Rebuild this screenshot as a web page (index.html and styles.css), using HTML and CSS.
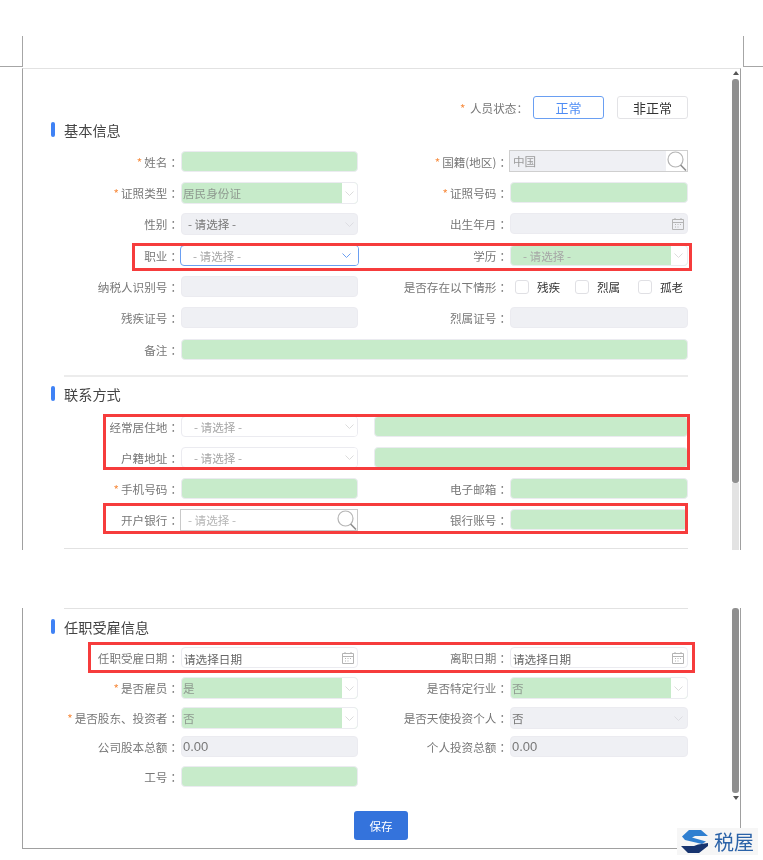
FILE: index.html
```html
<!DOCTYPE html>
<html lang="zh-CN">
<head>
<meta charset="utf-8">
<title>人员信息</title>
<link rel="stylesheet" href="styles.css">
</head>
<body>
<svg width="0" height="0" class="defs">
  <symbol id="chev" viewBox="0 0 9 5"><path d="M.5 .5 4.500 4.500 8.500 .5" fill="none" stroke="currentColor"/></symbol>
  <symbol id="glass" viewBox="0 0 20 20"><circle cx="8.5" cy="8.5" r="7.5" fill="none" stroke="#b5b5b5" stroke-width="1.2"/><path d="M13.6 14 19 19.5" stroke="#8d8d8d" stroke-width="1.6"/></symbol>
  <symbol id="cal" viewBox="0 0 12 13"><path d="M.5 2.500h11v10H.5z M.5 5.500h11" fill="none" stroke="#b4b4b4"/><path d="M3 1v2M9 1v2" stroke="#b4b4b4"/><path d="M3 7h1v1H3zM5.500 7h1v1h-1zM8 7h1v1H8zM3 9.500h1v1H3zM5.500 9.500h1v1h-1z" fill="#b4b4b4"/></symbol>
</svg>

<div class="mark mark-lv"></div><div class="mark mark-lh"></div>
<div class="mark mark-rv"></div><div class="mark mark-rh"></div>

<main class="doc">
  <section class="sheet sheet-top">
    <div class="form">
      <div class="status">
        <span class="lbl-inline"><i class="req">*</i> 人员状态<span class="c">：</span></span>
        <button class="btn btn-on">正常</button>
        <button class="btn">非正常</button>
      </div>
      <h2 class="title title-first">基本信息</h2>

      <div class="row">
        <label class="lbl"><i class="req">*</i>姓名<span class="c">：</span></label>
        <div class="field green"></div>
        <label class="lbl"><i class="req">*</i>国籍(地区)<span class="c">：</span></label>
        <div class="field lookup gray"><span class="val">中国</span><span class="lens"><svg class="ic-glass"><use href="#glass"/></svg></span></div>
      </div>
      <div class="row">
        <label class="lbl"><i class="req">*</i>证照类型<span class="c">：</span></label>
        <div class="field tall green sel"><span class="val">居民身份证</span><span class="arrow"><svg class="ic-chev"><use href="#chev"/></svg></span></div>
        <label class="lbl"><i class="req">*</i>证照号码<span class="c">：</span></label>
        <div class="field green"></div>
      </div>
      <div class="row row-32">
        <label class="lbl">性别<span class="c">：</span></label>
        <div class="field tall gray sel"><span class="val val-dark">- 请选择 -</span><span class="arrow clear"><svg class="ic-chev"><use href="#chev"/></svg></span></div>
        <label class="lbl">出生年月<span class="c">：</span></label>
        <div class="field gray date"><svg class="ic-cal"><use href="#cal"/></svg></div>
      </div>
      <div class="row">
        <label class="lbl">职业<span class="c">：</span></label>
        <div class="field focus sel"><span class="val val-ph">- 请选择 -</span><span class="arrow"><svg class="ic-chev"><use href="#chev"/></svg></span></div>
        <label class="lbl">学历<span class="c">：</span></label>
        <div class="field green sel"><span class="val val-ph">- 请选择 -</span><span class="arrow"><svg class="ic-chev"><use href="#chev"/></svg></span></div>
      </div>
      <div class="row">
        <label class="lbl">纳税人识别号<span class="c">：</span></label>
        <div class="field gray"></div>
        <label class="lbl">是否存在以下情形<span class="c">：</span></label>
        <div class="checks">
          <span class="box"></span><span class="chk">残疾</span>
          <span class="box"></span><span class="chk chk-mid">烈属</span>
          <span class="box"></span><span class="chk">孤老</span>
        </div>
      </div>
      <div class="row row-32">
        <label class="lbl">残疾证号<span class="c">：</span></label>
        <div class="field gray"></div>
        <label class="lbl">烈属证号<span class="c">：</span></label>
        <div class="field gray"></div>
      </div>
      <div class="row row-last">
        <label class="lbl">备注<span class="c">：</span></label>
        <div class="field green wide"></div>
      </div>

      <hr class="rule rule-a">
      <h2 class="title title-contact">联系方式</h2>

      <div class="row">
        <label class="lbl">经常居住地<span class="c">：</span></label>
        <div class="field plain sel"><span class="val val-ph">- 请选择 -</span><span class="arrow"><svg class="ic-chev"><use href="#chev"/></svg></span></div>
        <div class="field green addr"></div>
      </div>
      <div class="row">
        <label class="lbl">户籍地址<span class="c">：</span></label>
        <div class="field plain sel"><span class="val val-ph">- 请选择 -</span><span class="arrow"><svg class="ic-chev"><use href="#chev"/></svg></span></div>
        <div class="field green addr"></div>
      </div>
      <div class="row">
        <label class="lbl"><i class="req">*</i>手机号码<span class="c">：</span></label>
        <div class="field green"></div>
        <label class="lbl">电子邮箱<span class="c">：</span></label>
        <div class="field green"></div>
      </div>
      <div class="row row-last">
        <label class="lbl">开户银行<span class="c">：</span></label>
        <div class="field lookup white"><span class="val val-ph2">- 请选择 -</span><span class="lens"><svg class="ic-glass"><use href="#glass"/></svg></span></div>
        <label class="lbl">银行账号<span class="c">：</span></label>
        <div class="field green"></div>
      </div>
      <hr class="rule rule-b">
    </div>
    <div class="scroll">
      <span class="tri tri-up"></span>
      <span class="thumb thumb-top"></span>
      <span class="track"></span>
    </div>
  </section>

  <section class="sheet sheet-bottom">
    <div class="form">
      <hr class="rule rule-c">
      <h2 class="title title-job">任职受雇信息</h2>

      <div class="row row-30">
        <label class="lbl">任职受雇日期<span class="c">：</span></label>
        <div class="field plain date"><span class="val val-date">请选择日期</span><svg class="ic-cal"><use href="#cal"/></svg></div>
        <label class="lbl">离职日期<span class="c">：</span></label>
        <div class="field plain date"><span class="val val-date">请选择日期</span><svg class="ic-cal"><use href="#cal"/></svg></div>
      </div>
      <div class="row row-30">
        <label class="lbl"><i class="req">*</i>是否雇员<span class="c">：</span></label>
        <div class="field tall green sel"><span class="val">是</span><span class="arrow"><svg class="ic-chev"><use href="#chev"/></svg></span></div>
        <label class="lbl">是否特定行业<span class="c">：</span></label>
        <div class="field tall green sel"><span class="val">否</span><span class="arrow"><svg class="ic-chev"><use href="#chev"/></svg></span></div>
      </div>
      <div class="row row-29">
        <label class="lbl"><i class="req">*</i>是否股东、投资者<span class="c">：</span></label>
        <div class="field tall green sel"><span class="val">否</span><span class="arrow"><svg class="ic-chev"><use href="#chev"/></svg></span></div>
        <label class="lbl">是否天使投资个人<span class="c">：</span></label>
        <div class="field tall gray sel"><span class="val val-dark2">否</span><span class="arrow clear"><svg class="ic-chev"><use href="#chev"/></svg></span></div>
      </div>
      <div class="row row-30">
        <label class="lbl">公司股本总额<span class="c">：</span></label>
        <div class="field gray"><span class="val val-num">0.00</span></div>
        <label class="lbl">个人投资总额<span class="c">：</span></label>
        <div class="field gray"><span class="val val-num">0.00</span></div>
      </div>
      <div class="row row-last">
        <label class="lbl">工号<span class="c">：</span></label>
        <div class="field green"></div>
      </div>
      <button class="save">保存</button>
    </div>
    <div class="scroll scroll-b">
      <span class="thumb thumb-bottom"></span>
      <span class="tri tri-down"></span>
    </div>
  </section>
</main>

<div class="red red-job"></div>
<div class="red red-addr"></div>
<div class="red red-bank"></div>
<div class="red red-date"></div>

<div class="logo">
  <svg class="logo-s" viewBox="0 0 27 23">
    <path d="M8 0H20L27 6H14L11 7.500 25 11.500 21 14 4 10 1 6.500Z" fill="#2f7fd0"/>
    <path d="M27 13V16L18 23H7L0 16H13L17 14.500Z" fill="#17346f"/>
  </svg>
  <span class="logo-t">税屋</span>
</div>
</body>
</html>
```

FILE: styles.css
```css
* { box-sizing: border-box; }
html, body { margin: 0; padding: 0; }
body {
  position: relative;
  width: 763px;
  height: 860px;
  overflow: hidden;
  background: #fff;
  font-family: "Noto Sans CJK SC", "Noto Sans", sans-serif;
  font-size: 11.6px;
  color: #777;
  filter: blur(.45px);
}
.defs { position: absolute; }

/* crop marks of the word-processor page */
.mark { position: absolute; background: #a6a6a6; }
.mark-lv { left: 22px; top: 36px; width: 1px; height: 30px; }
.mark-lh { left: 0; top: 66px; width: 23px; height: 1px; }
.mark-rv { left: 743px; top: 36px; width: 1px; height: 30px; }
.mark-rh { left: 743px; top: 66px; width: 20px; height: 1px; }

.doc { padding: 68px 0 0 22px; width: 741px; }
.sheet {
  display: flex;
  border-left: 1px solid #a0a0a0;
  border-right: 1px solid #a0a0a0;
  overflow: hidden;
}
.sheet-top { height: 482px; border-top: 1px solid #e2e2e2; }
.sheet-bottom { height: 241px; margin-top: 58px; border-bottom: 1px solid #a0a0a0; }

.form { flex: 1; padding: 0 44px 0 28px; min-width: 0; }
.scroll { width: 7px; margin-right: 1px; display: flex; flex-direction: column; align-items: center; }
.scroll-b { height: 196px; }
.tri { width: 0; height: 0; border-left: 3.5px solid transparent; border-right: 3.5px solid transparent; }
.tri-up { margin-top: 2px; border-bottom: 4px solid #555; }
.tri-down { margin-top: 3px; border-top: 4px solid #555; }
.thumb { width: 7px; background: #8f8f8f; border-radius: 3px; }
.thumb-top { height: 404px; margin-top: 4px; }
.thumb-bottom { height: 185px; }
.track { flex: 1; width: 7px; background: #e3e3e3; }

.status {
  display: flex;
  justify-content: flex-end;
  align-items: center;
  margin-top: 27px;
  height: 23px;
}
.lbl-inline { margin-right: 5px; padding-top: 1px; }
.btn {
  width: 71px;
  height: 23px;
  padding: 0;
  background: #fff;
  border: 1px solid #e3e3e6;
  border-radius: 3px;
  font: 13px "Noto Sans CJK SC", sans-serif;
  color: #333;
}
.btn + .btn { margin-left: 13px; }
.btn-on { border-color: #6a9ff2; color: #4d8cf5; }

.title {
  position: relative;
  margin: 0;
  height: 16px;
  padding-left: 13px;
  font-size: 14.2px;
  font-weight: 400;
  line-height: 17px;
  color: #444;
}
.title::before {
  content: "";
  position: absolute;
  left: 0;
  top: 0;
  width: 4px;
  height: 15px;
  border-radius: 2px;
  background: #3f82f5;
}
.title-first { margin: 3px 0 13px; }
.title-contact { margin: 9px 0 14px; }
.title-job { margin: 10px 0 12px; }

.row {
  display: grid;
  grid-template-columns: 130px 177px 152px 178px;
  align-items: start;
  height: 31px;
}
.row-32 { height: 32px; }
.row-30 { height: 30px; }
.row-29 { height: 29px; }
.row-last { height: 21px; }

.lbl {
  display: flex;
  justify-content: flex-end;
  align-items: center;
  height: 21px;
  padding: 1px 2px 0 0;
  white-space: nowrap;
  line-height: 21px;
}
.c { font-family: "Noto Sans CJK TC", sans-serif; }
.req { font-style: normal; color: #f78c3f; padding-right: 2px; }

.field {
  display: flex;
  align-items: center;
  height: 21px;
  border: 1px solid #ebebf0;
  border-radius: 4px;
  overflow: hidden;
  color: #8f9a90;
}
.tall { height: 22px; }
.green { background: #c7ebca; }
.gray { background: #eff0f4; }
.plain { background: #fff; }
.wide { grid-column: 2 / 5; }
.addr { grid-column: 3 / 5; margin-left: 16px; }

.val { flex: 1; padding-left: 1px; white-space: nowrap; }
.val-dark { padding-left: 6px; color: #777; }
.val-dark2 { color: #777; }
.val-ph { padding-left: 12px; color: #a6a6a6; }
.val-ph2 { padding-left: 7px; color: #b5b5b5; }
.val-date { color: #666; padding-top: 2px; }
.val-num { font-family: "Liberation Sans", sans-serif; font-size: 13px; color: #777; }

.arrow {
  display: flex;
  align-items: center;
  width: 16px;
  height: 100%;
  padding-left: 3px;
  background: #fff;
  color: #dcdcdc;
}
.row > .sel:nth-child(2) .arrow { width: 15px; }
.arrow.clear { background: transparent; color: #dddde2; }
.ic-chev { width: 9px; height: 5px; flex: none; }

.focus {
  margin-left: -1px;
  margin-right: -1px;
  background: #fff;
  border-color: #6a9ff2;
}
.row > .focus:nth-child(2) .arrow { width: 17px; padding-left: 1px; color: #6a9ff2; }

.lookup { border-radius: 0; }
.lookup.gray {
  height: 22px;
  margin: -1px 0 0 -1px;
  border: 1.500px solid #cfcfcf;
  color: #9a9a9a;
}
.lookup.gray .val { padding-left: 3px; }
.lookup.white {
  height: 22px;
  margin-left: -1px;
  background: #fff;
  border: 1px solid #c9c9c9;
}
.lens {
  display: flex;
  align-items: center;
  justify-content: flex-end;
  width: 21px;
  height: 100%;
  background: #fff;
}
.ic-glass { width: 20px; height: 20px; }

.date { justify-content: flex-end; padding-right: 3px; }
.date .val { padding-left: 2px; }
.ic-cal { width: 12px; height: 13px; flex: none; }

.checks { display: flex; align-items: center; height: 21px; padding-left: 5px; }
.box {
  flex: none;
  width: 14px;
  height: 14px;
  border: 1px solid #e0e0e4;
  border-radius: 3px;
  background: #fff;
}
.chk { flex: none; width: 46px; padding-left: 8px; color: #333; white-space: nowrap; }
.chk-mid { width: 49px; }

.rule { margin: 0 0 0 13px; border: 0; background: #ececec; }
.rule-a { height: 2px; margin-top: 15px; }
.rule-b { height: 1px; margin-top: 18px; background: #e2e2e2; }
.rule-c { height: 1px; background: #e2e2e2; }

.save {
  display: block;
  width: 54px;
  height: 29px;
  margin: 24px 0 0 303px;
  padding: 0;
  border: 0;
  border-radius: 3px;
  background: #3473dc;
  color: #fff;
  font: 11.6px "Noto Sans CJK SC", sans-serif;
}

/* red annotations drawn over the screenshot */
.red { position: absolute; border: 3px solid #f63c3c; pointer-events: none; }
.red-job { left: 132px; top: 243px; width: 560px; height: 28px; }
.red-addr { left: 103px; top: 414px; width: 587px; height: 56px; }
.red-bank { left: 103px; top: 503px; width: 585px; height: 31px; }
.red-date { left: 88px; top: 642px; width: 607px; height: 31px; }

.logo {
  position: absolute;
  left: 677px;
  top: 828px;
  width: 81px;
  height: 27px;
  display: flex;
  align-items: center;
  gap: 6px;
  padding-left: 4px;
  background: #f6f6f6;
}
.logo-s { width: 27px; height: 23px; flex: none; }
.logo-t { font-size: 20px; line-height: 27px; color: #2a62a8; }
```
